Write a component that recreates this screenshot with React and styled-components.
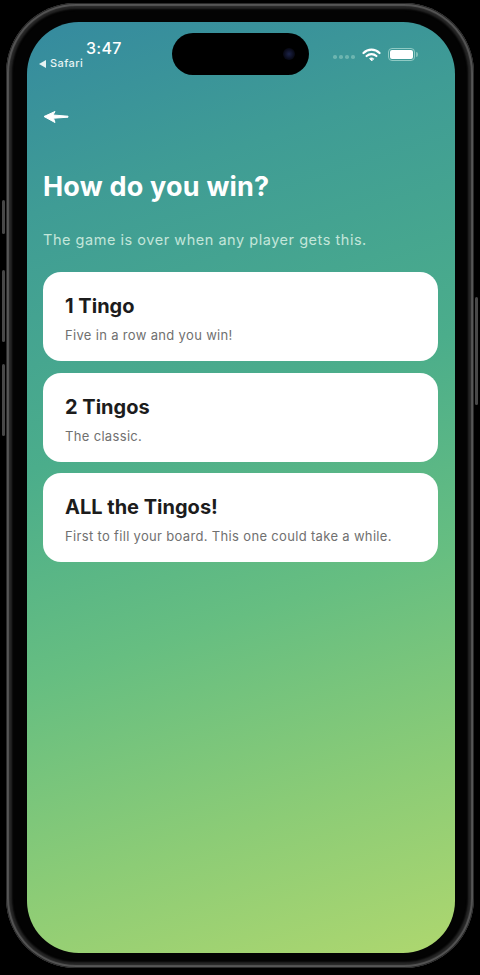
import React from 'react'
import styled, { createGlobalStyle } from 'styled-components'

const GlobalStyle = createGlobalStyle`
    html, body {
        margin: 0;
        padding: 0;
        background: #000;
    }
    body {
        width: 480px;
        height: 975px;
        overflow: hidden;
        font-family: 'Inter', 'Liberation Sans', sans-serif;
    }
`
const Page = styled.div`
    width: 480px;
    height: 975px;
    padding: 3px 6px 7px 6px;
    box-sizing: border-box;
    background: #000;
`
const Phone = styled.div`
    position: relative;
    height: 100%;
    padding: 19px 19px 15px 21px;
    box-sizing: border-box;
    border-radius: 70px;
    background: #030303;
    box-shadow: inset 0 0 0 1px #2a2a2a, inset 0 0 1px 3px #565656, inset 0 0 2px 6px #262626;
`
const SideButton = styled.span`
    position: absolute;
    top: ${p => p.$top}px;
    ${p => (p.$right ? 'right: -4px;' : 'left: -4px;')}
    width: 3px;
    height: ${p => p.$height}px;
    border-radius: 2px;
    background: #484848;
`
const Screen = styled.div`
    height: 100%;
    border-radius: 52px;
    overflow: hidden;
    background: linear-gradient(162deg, #358a9f 0%, #3f9c95 18%, #4bad8b 42%, #66be81 62%, #8ccc76 82%, #aed76f 100%);
    display: flex;
    flex-direction: column;
`
const StatusBar = styled.div`
    display: grid;
    grid-template-columns: 145px 137px 1fr;
    height: 53px;
    padding-top: 11px;
    box-sizing: border-box;
    color: #fff;
`
const StatusLeft = styled.div`
    display: flex;
    flex-direction: column;
    align-items: flex-start;
    padding: 6px 0 0 12px;
`
const Clock = styled.span`
    font-size: 16px;
    line-height: 18px;
    font-weight: 500;
    margin-left: 47px;
    letter-spacing: 0.3px;
`
const BackToApp = styled.span`
    font-size: 11px;
    line-height: 13px;
    font-weight: 500;
    letter-spacing: 0.4px;
    display: flex;
    align-items: center;
    gap: 4px;
    color: #e6f3f3;
`
const BackTriangle = styled.i`
    width: 0;
    height: 0;
    border-top: 4px solid transparent;
    border-bottom: 4px solid transparent;
    border-right: 7px solid #e6f3f3;
`
const Island = styled.div`
    height: 42px;
    border-radius: 21px;
    background: #000;
    display: flex;
    align-items: center;
    justify-content: flex-end;
    padding-right: 14px;
`
const Lens = styled.i`
    width: 12px;
    height: 12px;
    border-radius: 50%;
    background: radial-gradient(circle, #1c2348 0%, #0b0d1e 55%, #000 100%);
`
const StatusRight = styled.div`
    display: flex;
    align-items: center;
    padding: 2px 0 0 24px;
    height: 42px;
    box-sizing: border-box;
`
const Signal = styled.div`
    display: flex;
    gap: 2.5px;
    margin-right: 7px;
    margin-top: 4px;
`
const SignalDot = styled.i`
    width: 3.5px;
    height: 3.5px;
    border-radius: 50%;
    background: #6db5b0;
`
const Battery = styled.div`
    margin-left: 7px;
    margin-top: -1px;
    width: 27px;
    height: 13px;
    padding: 1px;
    box-sizing: border-box;
    border: 1px solid #8fcac4;
    border-radius: 4px;
    position: relative;
    &::before {
        content: '';
        display: block;
        height: 100%;
        background: #fff;
        border-radius: 2px;
    }
    &::after {
        content: '';
        position: absolute;
        right: -4px;
        top: 3px;
        width: 2px;
        height: 5px;
        border-radius: 0 2px 2px 0;
        background: #7fc0b8;
    }
`
const Content = styled.main`
    display: flex;
    flex-direction: column;
    padding: 0 17px 0 16px;
`
const BackButton = styled.button`
    align-self: flex-start;
    display: flex;
    padding: 0;
    margin-top: 35px;
    border: 0;
    background: none;
    cursor: pointer;
`
const Title = styled.h1`
    margin: 45px 0 0;
    font-size: 27px;
    line-height: 36px;
    font-weight: 700;
    color: #fff;
    letter-spacing: 0.2px;
`
const Subtitle = styled.p`
    margin: 25px 0 0;
    font-size: 14.5px;
    line-height: 20px;
    font-weight: 400;
    letter-spacing: 0.53px;
    color: #c3e6da;
`
const OptionList = styled.div`
    display: flex;
    flex-direction: column;
    gap: 11.5px;
    margin-top: 22px;
`
const OptionCard = styled.button`
    display: flex;
    flex-direction: column;
    align-items: flex-start;
    height: 89px;
    padding: 21px 22px 0;
    box-sizing: border-box;
    border: 0;
    border-radius: 18px;
    background: #fff;
    font-family: inherit;
    text-align: left;
    cursor: pointer;
`
const OptionName = styled.span`
    font-size: 20px;
    line-height: 26px;
    font-weight: 700;
    color: #1c1c1c;
`
const OptionText = styled.span`
    margin-top: 7px;
    font-size: 13px;
    line-height: 18px;
    letter-spacing: 0.33px;
    color: #707070;
`

const options = [
    { name: '1 Tingo', text: 'Five in a row and you win!' },
    { name: '2 Tingos', text: 'The classic.' },
    { name: 'ALL the Tingos!', text: 'First to fill your board. This one could take a while.' },
]

const App = () => {
  return (
    <Page>
      <GlobalStyle />
      <Phone>
        <SideButton $top={197} $height={34} />
        <SideButton $top={267} $height={72} />
        <SideButton $top={361} $height={72} />
        <SideButton $right $top={294} $height={108} />
        <Screen>
          <StatusBar>
            <StatusLeft>
              <Clock>3:47</Clock>
              <BackToApp><BackTriangle />Safari</BackToApp>
            </StatusLeft>
            <Island><Lens /></Island>
            <StatusRight>
              <Signal>
                <SignalDot /><SignalDot /><SignalDot /><SignalDot />
              </Signal>
              <svg width="19" height="14" viewBox="0 0 19 14" fill="none" stroke="#fff" strokeWidth="2.2" strokeLinecap="round">
                <path d="M1.5 5 C6 0.6 13 0.6 17.5 5" />
                <path d="M4.6 8 C7.4 5.4 11.6 5.4 14.4 8" />
                <path d="M9.5 12.6 L7.6 10.6 C8.7 9.8 10.3 9.8 11.4 10.6 Z" fill="#fff" strokeWidth="1" />
              </svg>
              <Battery />
            </StatusRight>
          </StatusBar>
          <Content>
            <BackButton aria-label="Back">
              <svg width="26" height="14" viewBox="0 0 26 14" fill="#fff" stroke="#fff" strokeWidth="1" strokeLinejoin="round">
                <path d="M1 6.5 L12 1.5 L10 5 L25 6.2 L25 7.2 L10.5 8.2 L12 12.5 Z" />
              </svg>
            </BackButton>
            <Title>How do you win?</Title>
            <Subtitle>The game is over when any player gets this.</Subtitle>
            <OptionList>
              {options.map(option => (
                <OptionCard key={option.name}>
                  <OptionName>{option.name}</OptionName>
                  <OptionText>{option.text}</OptionText>
                </OptionCard>
              ))}
            </OptionList>
          </Content>
        </Screen>
      </Phone>
    </Page>
  )
}

export default App
